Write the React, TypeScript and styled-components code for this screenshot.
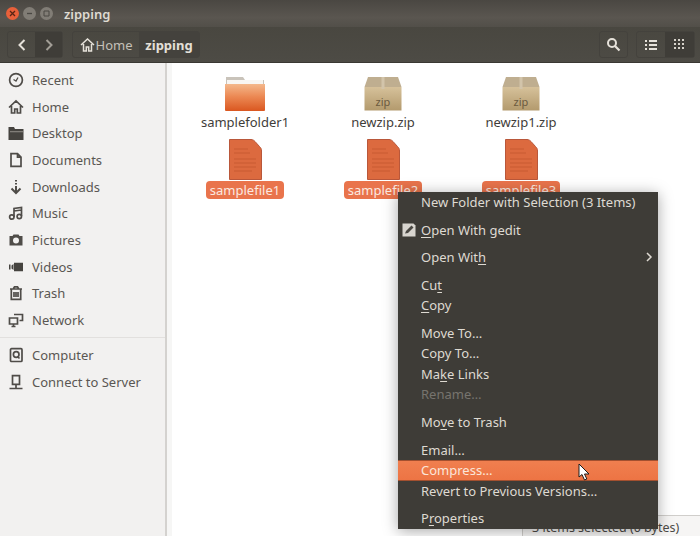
import React from 'react';
import styled, { createGlobalStyle } from 'styled-components';

const FontStack = '"Noto Sans", "Open Sans", sans-serif';

const GlobalStyle = createGlobalStyle`
	html, body {
		margin: 0;
		padding: 0;
		background: #fff;
	}
	body {
		font-family: ${FontStack};
		overflow: hidden;
	}
`;

const Window = styled.div`
	position: relative;
	width: 700px;
	height: 536px;
	overflow: hidden;
	display: flex;
	flex-direction: column;
`;

const TitleBar = styled.div`
	height: 27px;
	display: flex;
	align-items: center;
	padding-left: 6px;
	background: linear-gradient(#4a4742, #5a5650 65%, #524f49);
`;

const WindowDot = styled.div<{ close?: boolean }>`
	width: 13px;
	height: 13px;
	border-radius: 50%;
	margin-right: 4px;
	display: flex;
	align-items: center;
	justify-content: center;
	background: ${p => (p.close ? '#e8603a' : '#817d76')};
`;

const TitleText = styled.div`
	margin-left: 7px;
	font-size: 13px;
	font-weight: 600;
	color: #dfdbd2;
`;

const ToolBar = styled.div`
	height: 36px;
	box-sizing: border-box;
	padding: 4px 5px 4px 7px;
	display: flex;
	align-items: stretch;
	background: linear-gradient(#494740, #4d4b45);
	border-bottom: 1px solid #3a3833;
`;

const ButtonGroup = styled.div<{ left?: number }>`
	display: flex;
	margin-left: ${p => p.left ?? 0}px;
	border: 1px solid #44423d;
	border-radius: 3px;
`;

const ToolButton = styled.div<{ width?: number; active?: boolean }>`
	width: ${p => (p.width ? `${p.width}px` : 'auto')};
	display: flex;
	align-items: center;
	justify-content: center;
	gap: 1px;
	font-size: 13px;
	color: #c4c0b8;
	background: ${p => (p.active ? '#3f3d38' : 'transparent')};
`;

const CrumbActive = styled(ToolButton)`
	font-weight: 700;
	color: #e4e0d8;
	background: #44423d;
`;

const Spacer = styled.div`
	flex: 1;
`;

const Body = styled.div`
	flex: 1;
	display: flex;
	min-height: 0;
	background: #fff;
`;

const SideBar = styled.div`
	width: 165px;
	flex-shrink: 0;
	padding-top: 3.5px;
	background: #f2f1f0;
	border-right: 2px solid #d4d2cf;
	display: flex;
	flex-direction: column;
`;

const SideRow = styled.div`
	height: 26.7px;
	display: flex;
	align-items: center;
	padding-left: 8px;
	gap: 8px;
	font-size: 13px;
	color: #5a5753;
	svg {
		flex-shrink: 0;
	}
`;

const SideSeparator = styled.div`
	height: 1px;
	margin: 3.5px 0 4px;
	background: #e2e0de;
`;

const Gutter = styled.div`
	width: 5px;
	background: #f6f6f5;
`;

const IconGrid = styled.div`
	flex: 1;
	display: grid;
	grid-template-columns: repeat(3, 138px);
	grid-auto-rows: 62px;
	align-content: start;
	padding: 14px 0 0 4px;
`;

const GridItem = styled.div`
	display: flex;
	flex-direction: column;
	align-items: center;
`;

const IconSlot = styled.div`
	height: 34px;
	display: flex;
	align-items: flex-start;
	justify-content: center;
`;

const FileSlot = styled(IconSlot)`
	height: 42px;
`;

const ItemLabel = styled.div`
	margin-top: 2.5px;
	font-size: 13px;
	line-height: 17px;
	color: #3f3d3a;
`;

const SelectedLabel = styled.div`
	padding: 0 4px;
	font-size: 13px;
	line-height: 18px;
	color: #fbe9e0;
	background: #e9744c;
	border-radius: 4px;
`;

const StatusBox = styled.div`
	position: absolute;
	right: 0;
	top: 515px;
	width: 178px;
	height: 21px;
	box-sizing: border-box;
	padding: 3px 0 0 9px;
	font-size: 12.5px;
	line-height: 17px;
	white-space: nowrap;
	color: #4c4a46;
	background: #f6f5f4;
	border-top: 1px solid #d0cecb;
	border-left: 1px solid #d0cecb;
`;

const Menu = styled.div`
	position: absolute;
	left: 398px;
	top: 192px;
	width: 260px;
	height: 337px;
	background: #3e3c37;
	box-shadow: 0 2px 14px rgba(0, 0, 0, 0.35);
	display: flex;
	flex-direction: column;
`;

const MenuRow = styled.div<{ hot?: boolean; disabled?: boolean }>`
	position: relative;
	height: 20.5px;
	flex-shrink: 0;
	box-sizing: border-box;
	display: flex;
	align-items: center;
	padding-left: 23px;
	font-size: 13px;
	white-space: nowrap;
	color: ${p => (p.disabled ? '#77746e' : p.hot ? '#fbe6da' : '#dedad2')};
	background: ${p => (p.hot ? 'linear-gradient(#f07f4f, #ed7444)' : 'transparent')};
	border-top: ${p => (p.hot ? '1px solid #a3502f' : 'none')};
	border-bottom: ${p => (p.hot ? '1px solid #a3502f' : 'none')};
`;

const MenuGap = styled.div<{ size?: number }>`
	height: ${p => p.size ?? 7}px;
	flex-shrink: 0;
`;

const MenuIcon = styled.div`
	position: absolute;
	left: 4px;
	top: 3px;
	display: flex;
`;

const SubArrow = styled.div`
	position: absolute;
	right: 5px;
	top: 5px;
	display: flex;
`;

const Cursor = styled.div`
	position: absolute;
	left: 578px;
	top: 463px;
	display: flex;
`;

const Key = styled.span`
	text-decoration: underline;
	text-underline-offset: 2px;
`;

const Stroke = { fill: 'none', stroke: '#4f4c48', strokeWidth: 1.7 };

const SideIcons: Record<string, React.ReactNode> = {
	Recent: <><circle cx="8" cy="8" r="6.4" {...Stroke} /><path d="M5.500 7.500 8 9l2-3.500" {...Stroke} strokeWidth={1.3} /></>,
	Home: <path d="M1 8.500 8 2l7 6.500M3.500 7v7h3.200v-4h2.600v4h3.200V7" {...Stroke} />,
	Desktop: <><path d="M0.500 2h5.500l1 2h8.500v11H.5z" fill="#45433f" /><path d="M2 6h13v1.300H2z" fill="#807d78" /></>,
	Documents: <path d="M3 1.700h6.500L13 5.200v9.100H3zM9.500 1.700v3.500H13" {...Stroke} />,
	Downloads: <path d="M8 1v1.500M8 4v1.500M8 7v6.500M3.500 9.500 8 14l4.500-4.500" {...Stroke} strokeWidth={2} />,
	Music: <><path d="M6 12V3.500l7.500-1V11M6 6l7.500-1" {...Stroke} /><circle cx="3.800" cy="12" r="2.200" {...Stroke} /><circle cx="11.300" cy="11.500" r="2.200" {...Stroke} /></>,
	Pictures: <path fillRule="evenodd" d="M1.500 4h3l1-1.500h5l1 1.500h3v9.500h-13zM8 5.500a3 3 0 1 0 0 6 3 3 0 0 0 0-6z" fill="#4f4c48" />,
	Videos: <path d="M1 5.500h1.500v5H1zM3.500 6.500 5.500 5v6l-2-1.500zM6 3.800h9v8.400H6z" fill="#45433f" />,
	Trash: <path d="M2 4h12M5.500 3.500 6.500 1.800h3l1 1.700M3.300 4v10.300h9.400V4M6 7v5M8 7v5M10 7v5" {...Stroke} />,
	Network: <path d="M1.500 6h8v6h-8zM3.500 14.500h4M5.500 12v2.500M6 2.500h8.500v6H11.500" {...Stroke} />,
	Computer: <><rect x="2.500" y="1.700" width="11.500" height="12.800" rx="1" {...Stroke} /><circle cx="8.200" cy="7.500" r="2.800" {...Stroke} /><path d="M9.500 9.500l2 2" {...Stroke} /></>,
	'Connect to Server': <path d="M4.500 1.700h7v8.600h-7zM8 10.300V14M1.500 14.500h13" {...Stroke} />,
};

const SideIcon = (props: { name: string }) => (
	<svg width="16" height="16" viewBox="0 0 16 16">{SideIcons[props.name]}</svg>
);

const FolderIcon = () => (
	<svg width="42" height="34" viewBox="0 0 42 34">
		<defs>
			<linearGradient id="folderFill" x1="0" y1="0" x2="0" y2="1">
				<stop offset="0" stopColor="#f4b88c" />
				<stop offset="0.45" stopColor="#ec8a55" />
				<stop offset="1" stopColor="#da5720" />
			</linearGradient>
		</defs>
		<path d="M2 0h17l2 3h19v6H2z" fill="#c9c3ba" />
		<path d="M3 3h36v4H3z" fill="#f8f6f3" />
		<path d="M1 7h40v26a1 1 0 0 1-1 1H2a1 1 0 0 1-1-1z" fill="url(#folderFill)" />
	</svg>
);

const ZipIcon = () => (
	<svg width="38" height="34" viewBox="0 0 38 34">
		<defs>
			<linearGradient id="zipFill" x1="0" y1="0" x2="0" y2="1">
				<stop offset="0" stopColor="#d6c19a" />
				<stop offset="1" stopColor="#b39a6d" />
			</linearGradient>
		</defs>
		<path d="M4 0h30l3.500 10H.5z" fill="#bfae90" />
		<path d="M.5 10h37v23.500H.5z" fill="url(#zipFill)" />
		<path d="M17.500 0h3v12h-3z" fill="#d2c4aa" />
		<text x="19" y="29" textAnchor="middle" fontFamily={FontStack} fontSize="11" fill="#6b5a3e">zip</text>
	</svg>
);

const FileIcon = () => (
	<svg width="33" height="41" viewBox="0 0 33 41">
		<path d="M.5.500h21.500c2 0 3 1 4 2l4.500 5c1.500 1.500 2 2.500 2 4.500v28.500H.5z" fill="#dc6a3f" stroke="#b9573a" />
		<path d="M5 10h14M5 14h16M5 20h22M5 24h22M5 28h22M5 32h18" stroke="#c85a33" strokeWidth="1" />
	</svg>
);

const Items = ['Recent', 'Home', 'Desktop', 'Documents', 'Downloads', 'Music', 'Pictures', 'Videos', 'Trash', 'Network'];

const App = () => (
	<Window>
		<GlobalStyle />
		<TitleBar>
			<WindowDot close>
				<svg width="7" height="7" viewBox="0 0 7 7"><path d="M1 1l5 5M6 1 1 6" stroke="#5a2414" strokeWidth="1.300" /></svg>
			</WindowDot>
			<WindowDot>
				<svg width="7" height="7" viewBox="0 0 7 7"><path d="M1 3.500h5" stroke="#4a4843" strokeWidth="1.300" /></svg>
			</WindowDot>
			<WindowDot>
				<svg width="7" height="7" viewBox="0 0 7 7"><path d="M1 1h5v5H1z" fill="none" stroke="#4a4843" /></svg>
			</WindowDot>
			<TitleText>zipping</TitleText>
		</TitleBar>
		<ToolBar>
			<ButtonGroup>
				<ToolButton width={27}>
					<svg width="10" height="14" viewBox="0 0 10 14"><path d="M7.500 2 2.500 7l5 5" fill="none" stroke="#e6e2da" strokeWidth="2" /></svg>
				</ToolButton>
				<ToolButton width={27} active>
					<svg width="10" height="14" viewBox="0 0 10 14"><path d="M2.500 2l5 5-5 5" fill="none" stroke="#a29e96" strokeWidth="2" /></svg>
				</ToolButton>
			</ButtonGroup>
			<ButtonGroup left={9}>
				<ToolButton width={66}>
					<svg width="15" height="14" viewBox="0 0 15 14"><path d="M1 7 7.500 1 14 7M3.500 6v7h2.800V9h2.400v4h2.800V6" fill="none" stroke="#e6e2da" strokeWidth="1.500" /></svg>
					Home
				</ToolButton>
				<CrumbActive width={60}>zipping</CrumbActive>
			</ButtonGroup>
			<Spacer />
			<ButtonGroup>
				<ToolButton width={27}>
					<svg width="15" height="15" viewBox="0 0 15 15"><circle cx="6" cy="6" r="4" fill="none" stroke="#e6e2da" strokeWidth="2" /><path d="M9 9l4.500 4.500" stroke="#e6e2da" strokeWidth="2.200" /></svg>
				</ToolButton>
			</ButtonGroup>
			<ButtonGroup left={8}>
				<ToolButton width={28}>
					<svg width="12" height="10" viewBox="0 0 12 10"><path d="M0 0h2v2H0zM4 0h8v2H4zM0 4h2v2H0zM4 4h8v2H4zM0 8h2v2H0zM4 8h8v2H4z" fill="#e6e2da" /></svg>
				</ToolButton>
				<ToolButton width={29} active>
					<svg width="11" height="11" viewBox="0 0 11 11"><path d="M0 0h2v2H0zM4 0h2v2H4zM8 0h2v2H8zM0 4h2v2H0zM4 4h2v2H4zM8 4h2v2H8zM0 8h2v2H0zM4 8h2v2H4zM8 8h2v2H8z" fill="#d6d2ca" /></svg>
				</ToolButton>
			</ButtonGroup>
		</ToolBar>
		<Body>
			<SideBar>
				{Items.map(i => (
					<SideRow key={i}><SideIcon name={i} />{i}</SideRow>
				))}
				<SideSeparator />
				<SideRow><SideIcon name="Computer" />Computer</SideRow>
				<SideRow><SideIcon name="Connect to Server" />Connect to Server</SideRow>
			</SideBar>
			<Gutter />
			<IconGrid>
				<GridItem><IconSlot><FolderIcon /></IconSlot><ItemLabel>samplefolder1</ItemLabel></GridItem>
				<GridItem><IconSlot><ZipIcon /></IconSlot><ItemLabel>newzip.zip</ItemLabel></GridItem>
				<GridItem><IconSlot><ZipIcon /></IconSlot><ItemLabel>newzip1.zip</ItemLabel></GridItem>
				<GridItem><FileSlot><FileIcon /></FileSlot><SelectedLabel>samplefile1</SelectedLabel></GridItem>
				<GridItem><FileSlot><FileIcon /></FileSlot><SelectedLabel>samplefile2</SelectedLabel></GridItem>
				<GridItem><FileSlot><FileIcon /></FileSlot><SelectedLabel>samplefile3</SelectedLabel></GridItem>
			</IconGrid>
		</Body>
		<StatusBox>3 items selected (0 bytes)</StatusBox>
		<Menu>
			<MenuRow>New Folder with Selection (3 Items)</MenuRow>
			<MenuGap />
			<MenuRow>
				<MenuIcon>
					<svg width="14" height="14" viewBox="0 0 14 14"><path d="M.5.500h11l2 2v11H.5z" fill="#d8d5cf" /><path d="M3 10.500 4 8l5.500-5.500 2 2L6 10z" fill="#4a4843" /></svg>
				</MenuIcon>
				<span><Key>O</Key>pen With gedit</span>
			</MenuRow>
			<MenuGap />
			<MenuRow>
				<span>Open Wit<Key>h</Key></span>
				<SubArrow>
					<svg width="8" height="10" viewBox="0 0 8 10"><path d="M2 1l4 4-4 4" fill="none" stroke="#dedad2" strokeWidth="1.500" /></svg>
				</SubArrow>
			</MenuRow>
			<MenuGap />
			<MenuRow><span>Cu<Key>t</Key></span></MenuRow>
			<MenuRow><span><Key>C</Key>opy</span></MenuRow>
			<MenuGap />
			<MenuRow>Move To…</MenuRow>
			<MenuRow>Copy To…</MenuRow>
			<MenuRow><span>Ma<Key>k</Key>e Links</span></MenuRow>
			<MenuRow disabled>Rename…</MenuRow>
			<MenuGap />
			<MenuRow><span>Mo<Key>v</Key>e to Trash</span></MenuRow>
			<MenuGap size={7.5} />
			<MenuRow>Email…</MenuRow>
			<MenuRow hot>Compress…</MenuRow>
			<MenuRow>Revert to Previous Versions…</MenuRow>
			<MenuGap />
			<MenuRow><span>P<Key>r</Key>operties</span></MenuRow>
		</Menu>
		<Cursor>
			<svg width="12" height="18" viewBox="0 0 12 18"><path d="M1 1v13l3-2.500 2.500 5.500 2.300-1-2.300-5H11z" fill="#fff" stroke="#1c1c1c" /></svg>
		</Cursor>
	</Window>
);

export default App;
